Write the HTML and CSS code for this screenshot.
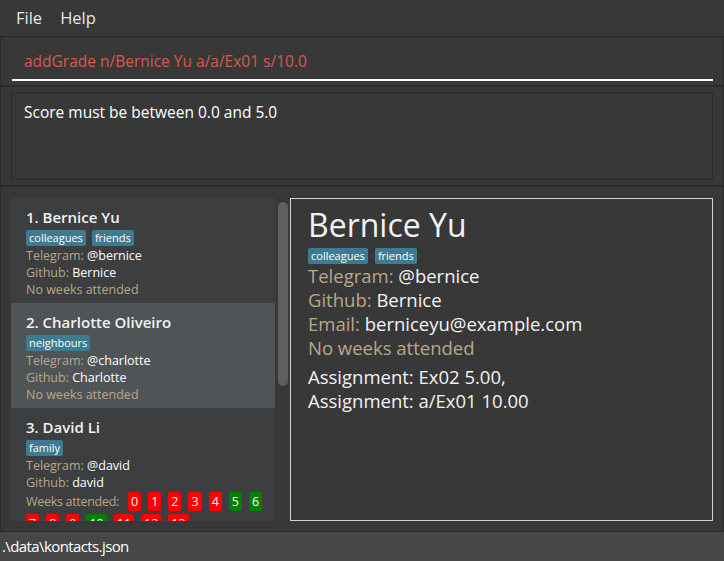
FILE: index.html
```html
<!DOCTYPE html>
<html>
<head>
<meta charset="utf-8">
<link rel="stylesheet" href="styles.css">
</head>
<body>
<div class="app">
  <div class="menubar">
    <span class="menu-item">File</span>
    <span class="menu-item">Help</span>
  </div>
  <div class="pane command-pane">
    <div class="command-field">addGrade n/Bernice Yu a/a/Ex01 s/10.0</div>
  </div>
  <div class="pane result-pane">
    <div class="result-box">Score must be between 0.0 and 5.0</div>
  </div>
  <div class="pane main-pane">
    <div class="list-wrap">
      <div class="list">
        <div class="card">
          <div class="card-name">1. Bernice Yu</div>
          <div class="tags"><span class="tag">colleagues</span><span class="tag">friends</span></div>
          <div class="line"><span class="lbl">Telegram: </span>@bernice</div>
          <div class="line"><span class="lbl">Github: </span>Bernice</div>
          <div class="line lbl">No weeks attended</div>
        </div>
        <div class="card selected">
          <div class="card-name">2. Charlotte Oliveiro</div>
          <div class="tags"><span class="tag">neighbours</span></div>
          <div class="line"><span class="lbl">Telegram: </span>@charlotte</div>
          <div class="line"><span class="lbl">Github: </span>Charlotte</div>
          <div class="line lbl">No weeks attended</div>
        </div>
        <div class="card">
          <div class="card-name">3. David Li</div>
          <div class="tags"><span class="tag">family</span></div>
          <div class="line"><span class="lbl">Telegram: </span>@david</div>
          <div class="line"><span class="lbl">Github: </span>david</div>
          <div class="weeks">
            <span class="lbl weeks-lbl">Weeks attended:</span>
            <span class="wk red">0</span><span class="wk red">1</span><span class="wk red">2</span><span class="wk red">3</span><span class="wk red">4</span><span class="wk green">5</span><span class="wk green">6</span>
            <span class="wk red">7</span><span class="wk red">8</span><span class="wk red">9</span><span class="wk green">10</span><span class="wk red">11</span><span class="wk red">12</span><span class="wk red">13</span>
          </div>
        </div>
      </div>
      <div class="scrollbar"><div class="thumb"></div></div>
    </div>
    <div class="detail">
      <div class="detail-name">Bernice Yu</div>
      <div class="tags dtags"><span class="tag">colleagues</span><span class="tag">friends</span></div>
      <div class="dline"><span class="lbl">Telegram: </span>@bernice</div>
      <div class="dline"><span class="lbl">Github: </span>Bernice</div>
      <div class="dline"><span class="lbl">Email: </span>berniceyu@example.com</div>
      <div class="dline dlbl">No weeks attended</div>
      <div class="dline assign first">Assignment: Ex02 5.00,</div>
      <div class="dline assign">Assignment: a/Ex01 10.00</div>
    </div>
  </div>
  <div class="statusbar">.\data\kontacts.json</div>
</div>
</body>
</html>
```

FILE: styles.css
```css
* { box-sizing: border-box; }
html, body { margin: 0; padding: 0; }
body {
  width: 724px;
  height: 561px;
  overflow: hidden;
  background: #383838;
  font-family: "Open Sans", "Noto Sans", sans-serif;
  color: #ffffff;
}
.app {
  display: flex;
  flex-direction: column;
  height: 561px;
}
.menubar {
  height: 36px;
  display: flex;
  align-items: center;
  padding-left: 16px;
  gap: 18px;
  font-size: 16.5px;
  color: #e6e6e6;
  background: #383838;
  padding-bottom: 1px;
}
.pane {
  border: 1px solid #2b2b2b;
  border-width: 1px 1px 0 1px;
  background: #383838;
}
.command-pane {
  height: 51px;
  padding: 10px 10px 0 11px;
  border-bottom: 2px solid #2b2b2b;
}
.command-field {
  height: 34px;
  border-bottom: 2px solid #ffffff;
  color: #d9594b;
  font-size: 15.5px;
  padding: 4px 0 0 12px;
  line-height: 20px;
}
.result-pane {
  height: 100px;
  padding: 5px 10px 5px 10px;
  border-bottom: 2px solid #2b2b2b;
  border-top: 0;
}
.result-box {
  height: 88px;
  border: 1px solid #2b2b2b;
  padding: 9px 12px;
  font-size: 15.5px;
  line-height: 20px;
  color: #ffffff;
}
.main-pane {
  flex: 1;
  border-top: 0;
  display: flex;
  padding: 11px 10px 10px 10px;
  gap: 2px;
}
.list-wrap {
  display: flex;
  width: 277px;
  background: #383838;
}
.list {
  width: 264px;
  background: #3c3e3f;
  overflow: hidden;
  height: 323px;
}
.scrollbar {
  width: 13px;
  padding: 4px 1px 0 3px;
}
.thumb {
  width: 10px;
  height: 184px;
  background: #5f5f5f;
  border-radius: 5px;
}
.card {
  height: 105px;
  padding: 9px 0 0 15px;
  background: #3c3e3f;
}
.card.selected { background: #4f5456; }
.card:last-child { height: 113px; }
.card-name {
  font-size: 15px;
  font-weight: 600;
  line-height: 20px;
  color: #f2f2f2;
}
.tags {
  display: flex;
  gap: 6px;
  margin-top: 3px;
  margin-bottom: 1px;
}
.tag {
  background: #3e7b91;
  color: #ffffff;
  font-size: 11px;
  line-height: 16px;
  padding: 0 3px;
  border-radius: 2px;
}
.line {
  font-size: 12.5px;
  line-height: 17px;
  color: #ffffff;
}
.lbl { color: #b9a78a; }
.weeks {
  font-size: 12.5px;
  line-height: 17px;
  display: flex;
  flex-wrap: wrap;
  column-gap: 7px;
  row-gap: 3px;
  width: 246px;
  margin-top: 1px;
}
.weeks-lbl { margin-right: 2px; padding-top: 1px; letter-spacing: -0.3px; }
.wk {
  color: #ffffff;
  height: 19px;
  line-height: 19px;
  padding: 0 3px;
  min-width: 13px;
  text-align: center;
  border-radius: 2px;
}
.wk.red { background: #ff0000; }
.wk.green { background: #008000; }
.detail {
  flex: 1;
  border: 1px solid #d4d4d4;
  padding: 6px 17px;
  height: 323px;
}
.detail-name {
  font-size: 32px;
  line-height: 40px;
  color: #f2f2f2;
}
.dtags { margin-top: 3px; margin-bottom: 0; gap: 7px; }
.dline {
  font-size: 18.5px;
  line-height: 24px;
  color: #f2f2f2;
}
.dline.dlbl { color: #b9a78a; }
.assign.first { margin-top: 5px; }
.statusbar {
  height: 30px;
  background: #474747;
  border-top: 1px solid #2b2b2b;
  font-size: 15px;
  letter-spacing: -0.6px;
  line-height: 28px;
  padding-left: 2px;
  color: #ffffff;
}
```
